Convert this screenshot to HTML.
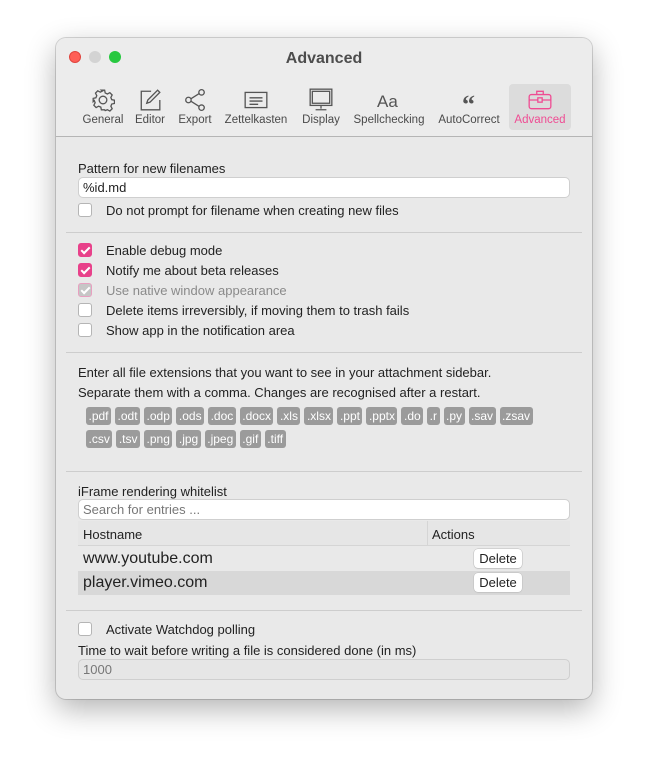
<!DOCTYPE html>
<html><head><style>
*{box-sizing:border-box;margin:0;padding:0}
body{width:648px;height:774px;background:#fff;font-family:"Liberation Sans",sans-serif;position:relative;overflow:hidden;color:#222}
.win{position:absolute;left:56px;top:38px;width:536px;height:661px;background:#e9e9e9;border-radius:10px;box-shadow:0 10px 30px rgba(0,0,0,.3),0 0 0 1px rgba(0,0,0,.15);overflow:hidden}
.tb{position:absolute;left:0;top:0;width:536px;height:99px;background:#ececec;border-bottom:1px solid #b5b5b5}
.dot{position:absolute;top:13px;width:12px;height:12px;border-radius:50%}
.title{position:absolute;top:12px;left:0;width:536px;text-align:center;font-weight:bold;font-size:16px;color:#4d4d4d}
.tab{position:absolute;top:46px;height:46px;text-align:center;font-size:11.5px;color:#4a4a4a}
.tab svg{display:block;margin:4px auto 0}
.tab span{position:absolute;left:0;right:0;top:30px;white-space:nowrap}
.a{position:absolute;font-size:13px;white-space:nowrap}
.inp{position:absolute;left:22px;width:492px;height:21px;background:#fff;border-radius:5px;border:1px solid #cfcfcf;font-size:13px;padding:2px 4px}
.hr{position:absolute;left:10px;width:516px;height:1px;background:#cdcdcd}
.cb{position:absolute;left:22px;width:14px;height:14px;border-radius:3px;background:#fff;border:1px solid #b5b5b5}
.cb.on{background:#e8418a;border-color:#e8418a}
.cb.dis{background:#c6c6c6;border-color:#e8a0c0}
.cb.on:after,.cb.dis:after{content:"";position:absolute;left:4px;top:1px;width:3px;height:7px;border:solid #fff;border-width:0 2px 2px 0;transform:rotate(45deg)}
.tags{position:absolute;left:30px;width:480px}
.tag{display:inline-block;background:#9b9b9b;color:#fff;font-size:12px;height:18px;line-height:18px;padding:0 2.5px;border-radius:3px;margin-right:4px}
.btn{position:absolute;left:418px;width:48px;height:19px;background:#fff;border-radius:4px;box-shadow:0 0 0 .5px #bbb,0 1px 1px #ccc;font-size:13px;text-align:center;line-height:19px}
</style></head><body>
<div class="win">
<div class="tb">
<div class="dot" style="left:13px;background:#fe5f57;border:.5px solid #e0443e"></div>
<div class="dot" style="left:33px;background:#d3d3d3"></div>
<div class="dot" style="left:53px;background:#28c840"></div>
<div class="title">Advanced</div>
<div class="tab" style="left:24px;width:46px"><svg width="24" height="24" viewBox="0 0 22 22" fill="none" stroke="#555" stroke-width="1.2"><circle cx="11" cy="11" r="3.5"/><path d="M9.5 2h3l.5 2.5 2 1 2.3-1.2 2.1 2.1-1.2 2.3.8 2 2.5.5v3l-2.5.5-.8 2 1.2 2.3-2.1 2.1-2.3-1.2-2 .8L12.5 20h-3l-.5-2.5-2-.8-2.3 1.2-2.1-2.1 1.2-2.3-.8-2L2 12.5v-3l2.5-.5.8-2-1.2-2.3 2.1-2.1 2.3 1.2 2-1z"/></svg><span>General</span></div>
<div class="tab" style="left:74px;width:40px"><svg width="24" height="24" viewBox="0 0 22 22" fill="none" stroke="#555" stroke-width="1.2"><path d="M12 3H3v17h17v-9"/><path d="M18 2l2 2-9 9-3 1 1-3z"/></svg><span>Editor</span></div>
<div class="tab" style="left:118px;width:42px"><svg width="24" height="24" viewBox="0 0 22 22" fill="none" stroke="#555" stroke-width="1.2"><circle cx="17" cy="4" r="2.5"/><circle cx="17" cy="18" r="2.5"/><circle cx="5" cy="11" r="2.5"/><path d="M7 10l8-5M7 12l8 5"/></svg><span>Export</span></div>
<div class="tab" style="left:166px;width:68px"><svg width="26" height="24" viewBox="0 0 24 22" fill="none" stroke="#555" stroke-width="1.2"><rect x="2" y="4" width="20" height="14"/><path d="M6 9h12M6 12h12M6 15h8"/></svg><span>Zettelkasten</span></div>
<div class="tab" style="left:240px;width:50px"><svg width="26" height="24" viewBox="0 0 24 22" fill="none" stroke="#555" stroke-width="1.2"><rect x="2" y="1" width="20" height="15"/><rect x="4" y="3" width="16" height="11"/><path d="M12 16v3M7 20h10"/></svg><span>Display</span></div>
<div class="tab" style="left:294px;width:78px"><svg width="26" height="24"><text x="1" y="19" font-size="17" font-family="Liberation Sans" fill="#555">Aa</text></svg><span>Spellchecking</span></div>
<div class="tab" style="left:378px;width:70px"><svg width="22" height="24"><text x="4" y="25" font-size="26" font-weight="bold" font-family="Liberation Serif" fill="#555">“</text></svg><span>AutoCorrect</span></div>
<div class="tab" style="left:453px;width:62px;top:46px;background:#dcdcdc;border-radius:4px;color:#ef4c93"><svg width="26" height="24" viewBox="0 0 24 22" fill="none" stroke="#ef4c93" stroke-width="1.2"><rect x="2" y="6" width="20" height="13" rx="2"/><path d="M9 6V3h6v3M2 11h8M14 11h8"/><rect x="10" y="9" width="4" height="4"/></svg><span>Advanced</span></div>
</div>
<div class="a" style="left:22px;top:123px">Pattern for new filenames</div>
<div class="inp" style="top:139px">%id.md</div>
<div class="cb" style="top:165px"></div><div class="a" style="left:50px;top:165px">Do not prompt for filename when creating new files</div>
<div class="hr" style="top:194px"></div>
<div class="cb on" style="top:205px"></div><div class="a" style="left:50px;top:205px">Enable debug mode</div>
<div class="cb on" style="top:225px"></div><div class="a" style="left:50px;top:225px">Notify me about beta releases</div>
<div class="cb dis" style="top:245px"></div><div class="a" style="left:50px;top:245px;color:#8a8a8a">Use native window appearance</div>
<div class="cb" style="top:265px"></div><div class="a" style="left:50px;top:265px">Delete items irreversibly, if moving them to trash fails</div>
<div class="cb" style="top:285px"></div><div class="a" style="left:50px;top:285px">Show app in the notification area</div>
<div class="hr" style="top:314px"></div>
<div class="a" style="left:22px;top:327px">Enter all file extensions that you want to see in your attachment sidebar.</div>
<div class="a" style="left:22px;top:347px">Separate them with a comma. Changes are recognised after a restart.</div>
<div class="tags" style="top:369px"><span class="tag">.pdf</span><span class="tag">.odt</span><span class="tag">.odp</span><span class="tag">.ods</span><span class="tag">.doc</span><span class="tag">.docx</span><span class="tag">.xls</span><span class="tag">.xlsx</span><span class="tag">.ppt</span><span class="tag">.pptx</span><span class="tag">.do</span><span class="tag">.r</span><span class="tag">.py</span><span class="tag">.sav</span><span class="tag">.zsav</span></div>
<div class="tags" style="top:392px"><span class="tag">.csv</span><span class="tag">.tsv</span><span class="tag">.png</span><span class="tag">.jpg</span><span class="tag">.jpeg</span><span class="tag">.gif</span><span class="tag">.tiff</span></div>
<div class="hr" style="top:433px"></div>
<div class="a" style="left:22px;top:446px">iFrame rendering whitelist</div>
<div class="inp" style="top:461px;color:#777">Search for entries ...</div>
<div style="position:absolute;left:22px;top:483px;width:492px;height:25px;background:#e6e6e6;border-bottom:1px solid #d5d5d5"></div>
<div style="position:absolute;left:371px;top:483px;width:1px;height:25px;background:#d5d5d5"></div>
<div class="a" style="left:27px;top:489px">Hostname</div><div class="a" style="left:376px;top:489px">Actions</div>
<div style="position:absolute;left:22px;top:533px;width:492px;height:24px;background:#d8d8d8"></div>
<div class="a" style="left:27px;top:512px;font-size:16px">www.youtube.com</div>
<div class="a" style="left:27px;top:536px;font-size:16px">player.vimeo.com</div>
<div class="btn" style="top:511px">Delete</div>
<div class="btn" style="top:535px">Delete</div>
<div class="hr" style="top:572px"></div>
<div class="cb" style="top:584px"></div><div class="a" style="left:50px;top:584px">Activate Watchdog polling</div>
<div class="a" style="left:22px;top:605px">Time to wait before writing a file is considered done (in ms)</div>
<div class="inp" style="top:621px;background:#e6e6e6;color:#777">1000</div>
</div>
</body></html>
